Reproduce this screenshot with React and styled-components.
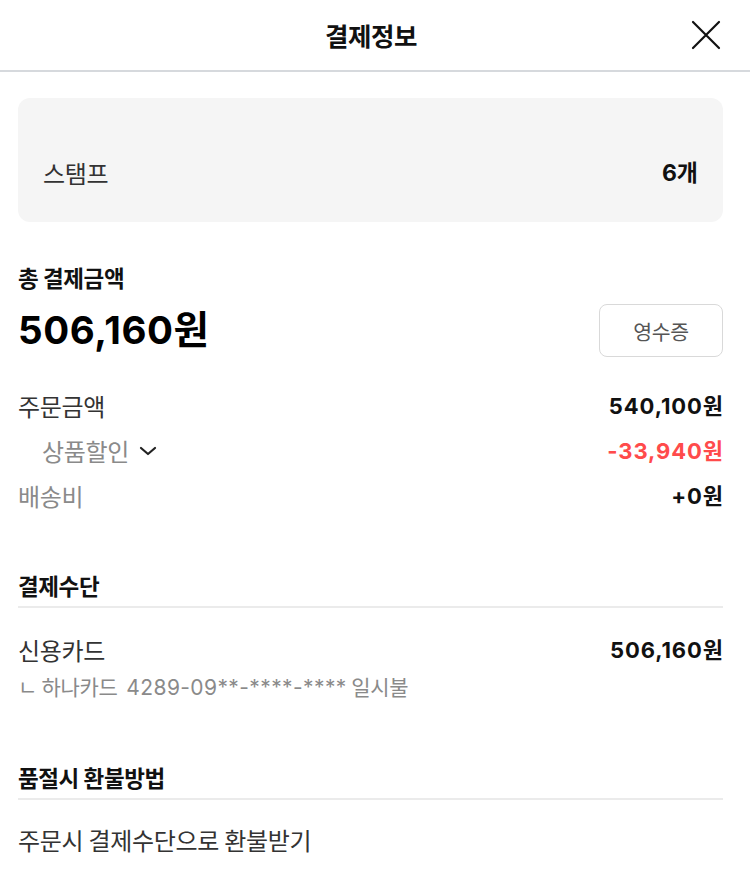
import React from "react";
import styled, { createGlobalStyle } from "styled-components";

const GlobalStyle = createGlobalStyle`
  html, body { margin: 0; padding: 0; background: #fff; }
  body {
    font-family: "Noto Sans CJK KR", "Noto Sans", sans-serif;
    color: #222;
  }
  * { box-sizing: border-box; }
`;

const NUM = `"Inter", "Noto Sans CJK KR", sans-serif`;

const Page = styled.div`
  width: 750px;
  min-height: 888px;
  background: #fff;
`;

const Header = styled.header`
  height: 72px;
  display: grid;
  grid-template-columns: 1fr auto 1fr;
  align-items: center;
  border-bottom: 2px solid #d6d9dd;
`;

const Title = styled.h1`
  grid-column: 2;
  margin: 0 8px 0 0;
  font-size: 25.5px;
  font-weight: 700;
  color: #111;
  line-height: 34px;
  letter-spacing: -0.5px;
`;

const CloseButton = styled.button`
  grid-column: 3;
  justify-self: end;
  margin-right: 28px;
  width: 32px;
  height: 32px;
  padding: 0;
  border: 0;
  background: none;
  display: flex;
  align-items: center;
  justify-content: center;
  cursor: pointer;
`;

const Content = styled.main`
  padding: 26px 27px 40px 18px;
`;

const StampCard = styled.div`
  height: 124px;
  background: #f5f5f5;
  border-radius: 12px;
  padding: 0 25px 34px 25px;
  display: flex;
  align-items: flex-end;
  justify-content: space-between;
`;

const CardLabel = styled.span`
  font-size: 24px;
  line-height: 30px;
  color: #333;
  letter-spacing: -0.3px;
`;

const CardValue = styled.span`
  font-family: ${NUM};
  font-size: 23px;
  line-height: 30px;
  font-weight: 700;
  color: #111;
`;

const SectionTitle = styled.h2`
  margin: ${(p) => p.$mt}px 0 0;
  font-size: 22.5px;
  line-height: 28px;
  font-weight: 700;
  color: #111;
  letter-spacing: -0.4px;
  ${(p) =>
    p.$divider &&
    `
    padding-bottom: 7px;
    border-bottom: 2px solid #ebebeb;
  `}
`;

const TotalRow = styled.div`
  margin-top: 13px;
  display: flex;
  align-items: center;
  justify-content: space-between;
`;

const TotalAmount = styled.span`
  font-family: ${NUM};
  font-size: 38.5px;
  line-height: 53px;
  font-weight: 700;
  color: #000;
  letter-spacing: 0.6px;
`;

const ReceiptButton = styled.button`
  width: 124px;
  height: 53px;
  border: 1px solid #d9d9d9;
  border-radius: 8px;
  background: #fff;
  font-family: "Noto Sans CJK KR", sans-serif;
  font-size: 20.5px;
  color: #555;
  cursor: pointer;
  letter-spacing: -0.3px;
`;

const Rows = styled.div`
  margin-top: ${(p) => p.$mt}px;
  display: flex;
  flex-direction: column;
  gap: ${(p) => p.$gap}px;
`;

const Row = styled.div`
  display: flex;
  align-items: center;
  justify-content: space-between;
  height: 30px;
`;

const Label = styled.span`
  display: flex;
  align-items: center;
  gap: 10px;
  font-size: 24px;
  line-height: 30px;
  color: ${(p) => (p.$muted ? "#8a8a8a" : "#333")};
  padding-left: ${(p) => (p.$indent ? 24 : 0)}px;
  letter-spacing: -0.3px;
`;

const Amount = styled.span`
  font-family: ${NUM};
  font-size: 22px;
  line-height: 30px;
  font-weight: 700;
  color: ${(p) => (p.$red ? "#ff4b4b" : "#111")};
  letter-spacing: 0.9px;
  margin-right: -0.9px;
`;

const SubText = styled.div`
  margin-top: 8px;
  font-size: 21px;
  line-height: 26px;
  color: #8a8a8a;
  letter-spacing: -0.3px;
`;

const Num = styled.span`
  font-family: ${NUM};
  letter-spacing: 0.4px;
`;

const Plain = styled.div`
  margin-top: 25px;
  font-size: 24px;
  line-height: 30px;
  color: #333;
  letter-spacing: -0.3px;
`;

const Chevron = () => (
  <svg width="18" height="12" viewBox="0 0 18 12" fill="none">
    <path d="M2 3 L9 9 L16 3" stroke="#222" strokeWidth="2.2" strokeLinecap="round" strokeLinejoin="round" />
  </svg>
);

const CloseIcon = () => (
  <svg width="30" height="30" viewBox="0 0 30 30" fill="none">
    <path d="M2 2 L28 28 M28 2 L2 28" stroke="#111" strokeWidth="2.2" strokeLinecap="round" />
  </svg>
);

export default function App() {
  return (
    <>
      <GlobalStyle />
      <Page>
        <Header>
          <Title>결제정보</Title>
          <CloseButton aria-label="닫기">
            <CloseIcon />
          </CloseButton>
        </Header>
        <Content>
          <StampCard>
            <CardLabel>스탬프</CardLabel>
            <CardValue>6개</CardValue>
          </StampCard>

          <SectionTitle $mt={41}>총 결제금액</SectionTitle>
          <TotalRow>
            <TotalAmount>506,160원</TotalAmount>
            <ReceiptButton>영수증</ReceiptButton>
          </TotalRow>

          <Rows $mt={34} $gap={15}>
            <Row>
              <Label>주문금액</Label>
              <Amount>540,100원</Amount>
            </Row>
            <Row>
              <Label $muted $indent>
                상품할인 <Chevron />
              </Label>
              <Amount $red>-33,940원</Amount>
            </Row>
            <Row>
              <Label $muted>배송비</Label>
              <Amount>+0원</Amount>
            </Row>
          </Rows>

          <SectionTitle $mt={60} $divider>
            결제수단
          </SectionTitle>
          <Rows $mt={27} $gap={0}>
            <Row>
              <Label>신용카드</Label>
              <Amount>506,160원</Amount>
            </Row>
          </Rows>
          <SubText>
            ㄴ 하나카드&nbsp; <Num>4289-09**-****-****</Num> 일시불
          </SubText>

          <SectionTitle $mt={62} $divider>
            품절시 환불방법
          </SectionTitle>
          <Plain>주문시 결제수단으로 환불받기</Plain>
        </Content>
      </Page>
    </>
  );
}
